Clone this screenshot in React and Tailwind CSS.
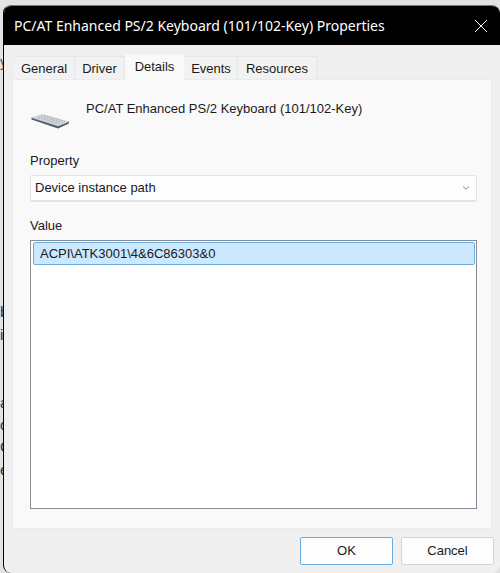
import { useState } from 'react'

const tabs = [
  { id: 'general', label: 'General', width: 'w-[61px]' },
  { id: 'driver', label: 'Driver', width: 'w-[50px]' },
  { id: 'details', label: 'Details', width: 'w-[60px]' },
  { id: 'events', label: 'Events', width: 'w-[53px]' },
  { id: 'resources', label: 'Resources', width: 'w-[79px]' },
]

// bits of the page that show beside the dialog
const pageText = [
  { char: 'y', className: 'top-[54px] text-[#8a4a2a]' },
  { char: 'b', className: 'top-[304px] text-[#2b2b66]' },
  { char: 'i', className: 'top-[327px] text-[#2b2b66]' },
  { char: 'a', className: 'top-[395px] text-[#333]' },
  { char: 'o', className: 'top-[417px] text-[#333]' },
  { char: 'C', className: 'top-[439px] text-[#333]' },
  { char: 'e', className: 'top-[462px] text-[#333]' },
]

function KeyboardIcon() {
  return (
    <svg className="w-10 h-4" viewBox="0 0 40 16" fill="none">
      <path d="M1.5 4.5L28 13L39 8.5V10.5L28 15.5L1.5 6.5Z" fill="#4c5962" />
      <path d="M1.5 4.5L12 1L39 8.8L28 13.2Z" fill="#d3d6da" />
      <path d="M1.5 4.8L28 13.2L39 8.8" stroke="#97a1a8" strokeWidth="0.6" />
      <path d="M8 4.2L29 10.8M11 3L32 9.6M14 2.2L35 8.4" stroke="#abafb6" strokeWidth="1" strokeDasharray="2 1" />
    </svg>
  )
}

function App() {
  const [activeTab, setActiveTab] = useState('details')

  return (
    <div className="relative min-h-screen flex flex-col overflow-hidden bg-[#e2e2e2] pt-[5px] pl-[3px] font-['Liberation_Sans',Arial,sans-serif] text-[13px] leading-4 text-[#1a1a1a]">
      <div className="absolute left-0 top-0 w-[3px] h-full overflow-hidden" aria-hidden="true">
        {pageText.map((item) => (
          <span key={item.className} className={`absolute left-0 text-[15px] leading-4 ${item.className}`}>
            {item.char}
          </span>
        ))}
      </div>

      <div className="relative flex-1 flex flex-col rounded-lg border-l border-t border-l-black border-t-[#777] bg-[#efefef] overflow-hidden">
        <header className="h-[39px] flex items-center justify-between bg-black pl-[10px] pr-3 text-white">
          <h1 className="font-['Noto_Sans','Open_Sans',sans-serif] text-[14px] leading-5 whitespace-nowrap">
            PC/AT Enhanced PS/2 Keyboard (101/102-Key) Properties
          </h1>
          <button aria-label="Close">
            <svg className="w-[14px] h-[14px]" viewBox="0 0 14 14" fill="none" stroke="currentColor" strokeWidth="1">
              <path d="M1 1L13 13M13 1L1 13" />
            </svg>
          </button>
        </header>

        <div className="flex-1 flex flex-col px-2 pt-[9px]">
          <div className="flex items-end pl-0.5" role="tablist">
            {tabs.map((tab) => (
              <button
                key={tab.id}
                role="tab"
                aria-selected={activeTab === tab.id}
                onClick={() => setActiveTab(tab.id)}
                className={`${tab.width} border-t border-r whitespace-nowrap ${
                  activeTab === tab.id
                    ? 'h-[26px] -mb-px relative pb-0.5 bg-[#f9f9f9] border-[#f4f4f4]'
                    : 'h-[23px] pt-px bg-[#f2f2f2] border-[#e7e7e7]'
                }`}
              >
                {tab.label}
              </button>
            ))}
          </div>

          <div className="flex-1 flex flex-col bg-[#f9f9f9] border border-[#ebebeb] pl-[17px] pr-[14px] pb-[19px]">
            <div className="flex items-start pt-[21px]">
              <div className="w-14 pt-3 shrink-0">
                <KeyboardIcon />
              </div>
              <p>PC/AT Enhanced PS/2 Keyboard (101/102-Key)</p>
            </div>

            <label htmlFor="property" className="mt-6">Property</label>
            <div className="relative mt-[6px]">
              <select
                id="property"
                className="w-full h-[27px] appearance-none rounded-xs border border-b-2 border-[#e3e3e3] bg-[#fdfdfd] pl-1 pr-5"
              >
                <option>Device instance path</option>
              </select>
              <svg className="absolute right-[7px] top-[11px] w-2 h-1 text-[#888] pointer-events-none" viewBox="0 0 8 4" fill="none" stroke="currentColor">
                <path d="M1 0.5L4 3.2L7 0.5" />
              </svg>
            </div>

            <h2 id="value" className="mt-4">Value</h2>
            <ul
              role="listbox"
              aria-labelledby="value"
              className="mt-[6px] flex-1 border border-[#868d96] bg-white p-px pl-0.5"
            >
              <li role="option" aria-selected="true" className="h-[23px] flex items-center rounded-xs border border-[#6aaee0] bg-[#cce8ff] px-[6px]">
                ACPI\ATK3001\4&amp;6C86303&amp;0
              </li>
            </ul>
          </div>
        </div>

        <footer className="flex justify-end gap-2 pt-2 pr-[6px] pb-2">
          <button className="w-[93px] h-7 rounded-xs border border-[#68ade2] bg-[#fdfdfd]">OK</button>
          <button className="w-[93px] h-7 rounded-xs border border-[#d5d5d5] bg-[#fdfdfd]">Cancel</button>
        </footer>
      </div>
    </div>
  )
}

export default App
